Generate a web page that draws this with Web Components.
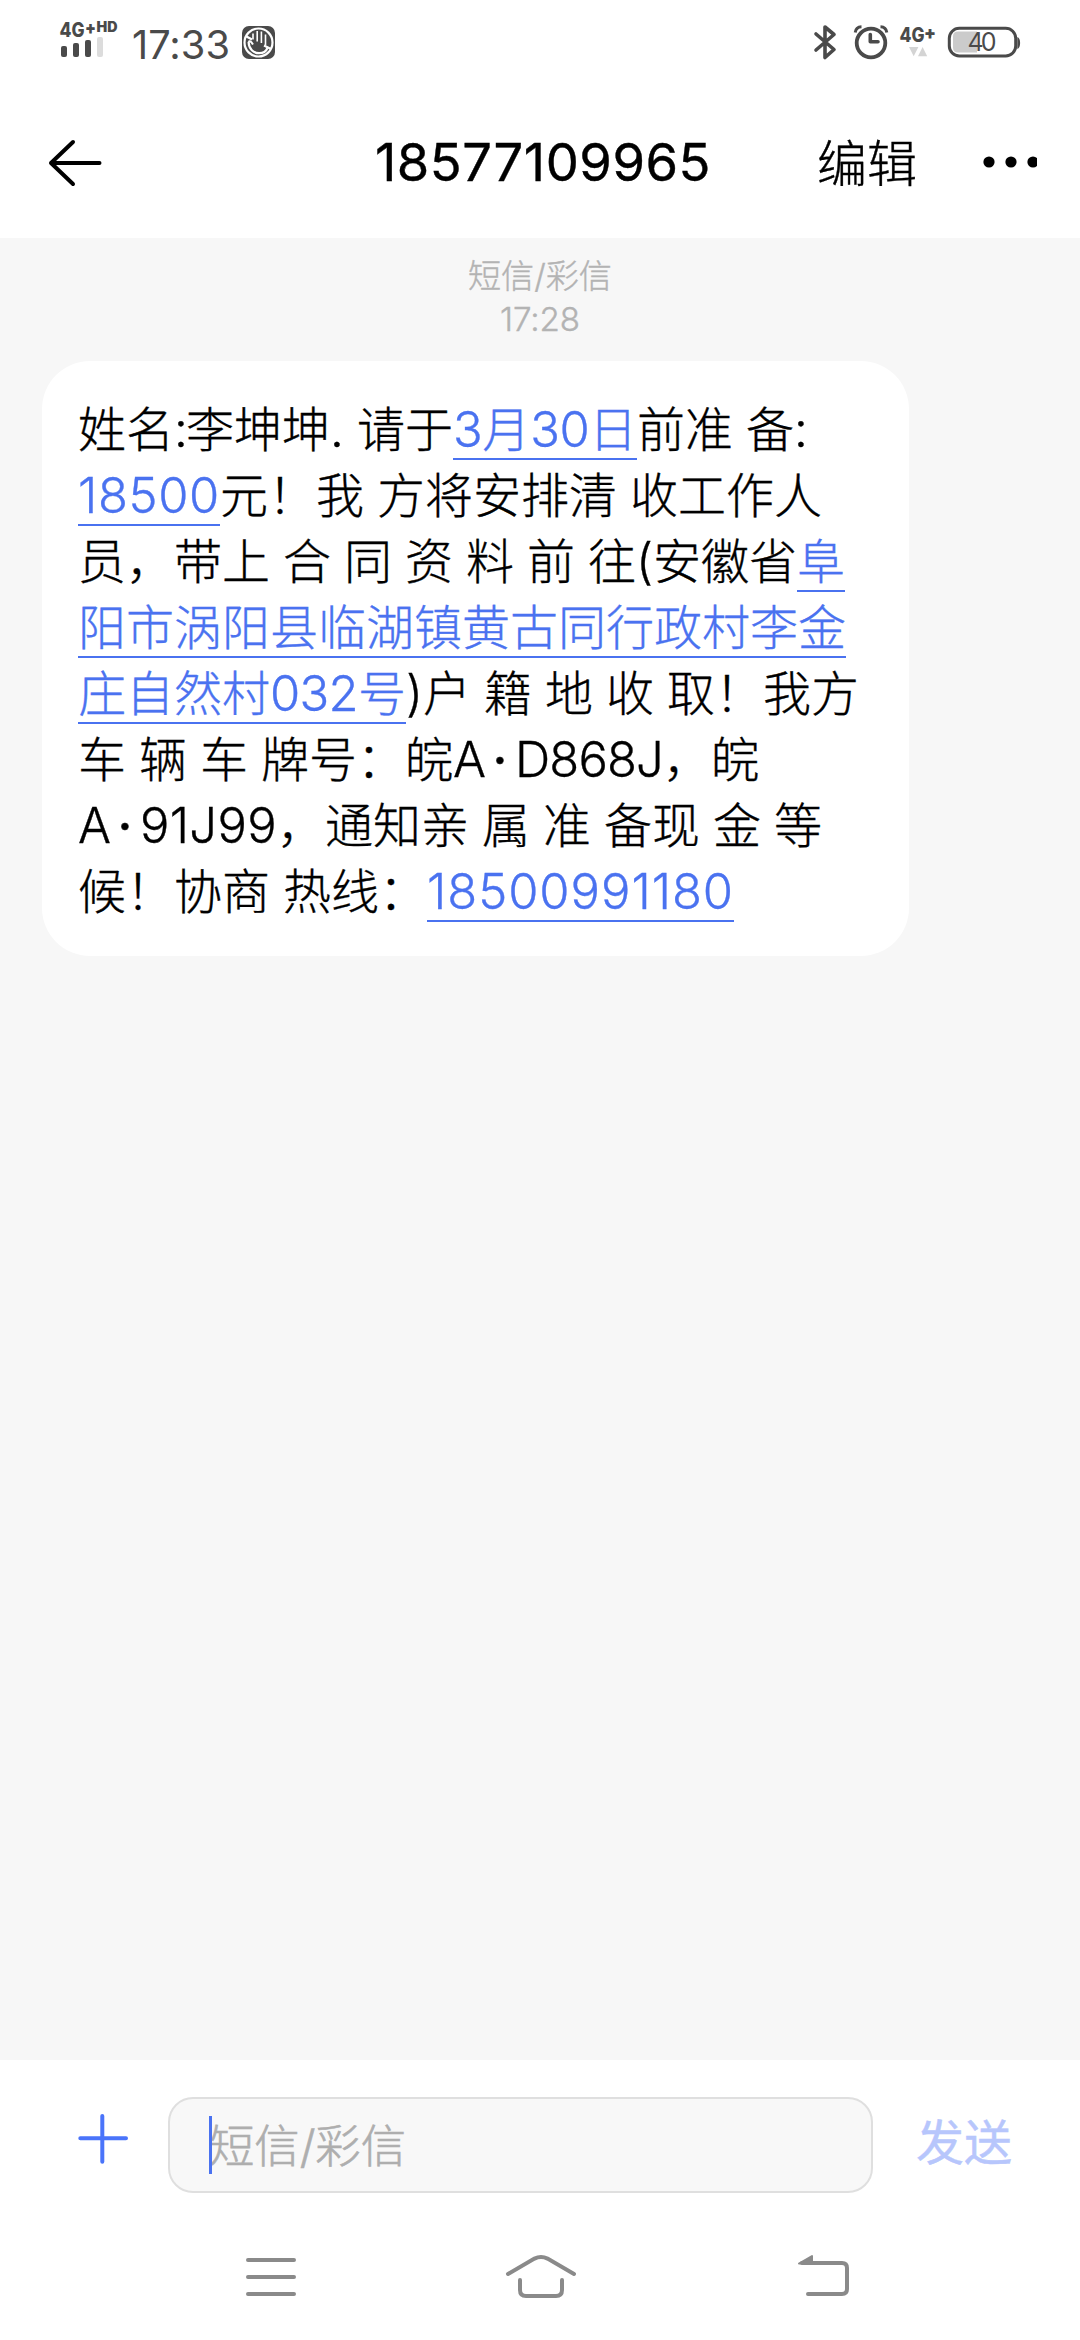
<!DOCTYPE html>
<html lang="zh-CN">
<head>
<meta charset="utf-8">
<title>短信</title>
<style>
html,body{margin:0;padding:0;background:#fff}
body{font-family:Inter,"Noto Sans CJK SC",sans-serif;height:2340px;overflow:hidden}
</style>
</head>
<body>
<sms-screen></sms-screen>
<script>
const define = (name, html, setup) => customElements.define(name, class extends HTMLElement {
  connectedCallback() {
    if (this.shadowRoot) return;
    const t = document.createElement('template');
    t.innerHTML = html;
    this.attachShadow({mode: 'open'}).append(t.content.cloneNode(true));
    if (setup) setup(this, this.shadowRoot);
  }
});

// Inline run with a fixed advance: letter-spacing is spread over its characters.
const fit = (host) => {
  const target = parseFloat(host.getAttribute('w'));
  if (!target) return;
  const probe = host.shadowRoot.querySelector('span');
  const n = [...host.textContent].length;
  if (!host.hasAttribute('center')) {
    host.style.letterSpacing = ((target - probe.getBoundingClientRect().width) / n) + 'px';
  }
  host.style.width = target + 'px';
};
define('text-run', `<style>
  :host{display:inline-block;white-space:pre;vertical-align:baseline}
  :host([center]){text-align:center;font-weight:500}
  span{font-size:1.02em}
</style><span><slot></slot></span>`, fit);

define('text-link', `<style>
  :host{display:inline;color:#4a72f0;padding-bottom:1px;
    background:linear-gradient(#4a72f0,#4a72f0) left bottom/100% 2.5px no-repeat}
</style><slot></slot>`);

define('msg-line', `<style>
  :host{display:block;height:66px;line-height:66px;white-space:pre}
</style><slot></slot>`);

define('status-bar', `<style>
  :host{display:flex;flex:none;height:84px;box-sizing:border-box;padding:20px 60px 0 60px;color:#4a4a4a;justify-content:space-between;align-items:flex-start}
  .side{display:flex;align-items:flex-start}
  svg{display:block;overflow:visible}
  text{font-family:Inter,sans-serif}
  .time{font-size:39px;line-height:48px;margin:1px 0 0 12px;width:112px}
</style>
<div class="side">
  <svg width="60" height="40" viewBox="60 20 60 40" fill="#4a4a4a">
    <text x="59.5" y="36.8" font-size="20" font-weight="800" textLength="25" lengthAdjust="spacingAndGlyphs">4G</text>
    <text x="85" y="33.5" font-size="18" font-weight="900" textLength="11" lengthAdjust="spacingAndGlyphs">+</text>
    <text x="96.5" y="32" font-size="14" font-weight="900" textLength="21" lengthAdjust="spacingAndGlyphs">HD</text>
    <rect x="61" y="46" width="6" height="11" rx="2"/><rect x="73" y="43" width="6" height="14" rx="2"/>
    <rect x="85" y="40" width="6" height="17" rx="2"/><rect x="97" y="37" width="6" height="20" rx="2" fill="#dcdcdc"/>
  </svg>
  <div class="time"><text-run w="98">17:33</text-run></div>
  <svg width="33" height="40" viewBox="242 20 33 40" style="margin-left:-2px">
    <rect x="242" y="26" width="33" height="33" rx="7" fill="#4a4a4a"/>
    <circle cx="258.5" cy="42.5" r="14" fill="none" stroke="#fff" stroke-width="2.2"/>
    <path d="M246.5 36.5L252 39.5M264 45.5L271 49" stroke="#fff" stroke-width="2.2"/>
    <path d="M253 39.5V33.5M257.2 41.5V31M261.4 43V31.5M265.5 45V34.5" stroke="#fff" stroke-width="1.6"/>
    <path d="M248.6 42C248.8 49 253.5 53.2 259.3 53.2C263 53.2 266 51.5 267.5 48" fill="none" stroke="#fff" stroke-width="2.2"/>
    <path d="M248.6 42Q250 39.5 253 44.5" fill="none" stroke="#fff" stroke-width="2"/>
  </svg>
</div>
<div class="side">
  <svg width="206" height="40" viewBox="814 20 206 40" fill="none" stroke="#4a4a4a">
    <path d="M816 34L834 49.5L825 57.5V27L834 34.5L816 50" stroke-width="3.6" stroke-linejoin="round" stroke-linecap="round"/>
    <circle cx="871" cy="43" r="14.3" stroke-width="3.8"/>
    <path d="M870.3 34.5V41.8H878" stroke-width="3.6" stroke-linejoin="round" stroke-linecap="round"/>
    <path d="M855.2 32.5C855.6 29.2 858 26.8 861.5 26.7M886.8 32.5C886.4 29.2 884 26.8 880.5 26.7" stroke-width="3"/>
    <g fill="#4a4a4a" stroke="none">
      <text x="899.5" y="42" font-size="20" font-weight="800" textLength="25" lengthAdjust="spacingAndGlyphs">4G</text>
      <text x="924" y="38.5" font-size="18" font-weight="900" textLength="12" lengthAdjust="spacingAndGlyphs">+</text>
      <path d="M909 47H918.4L913.7 56.2ZM918 56.2H927.2L922.6 47Z" fill="#d4d4d4"/>
      <path d="M977 31.5H958q-5 0-5 5v11q0 5 5 5h19z" fill="#cbcbcb"/>
      <path d="M1017.3 37q2.8 1.2 2.8 6t-2.8 6z"/>
      <text x="967.5" y="51.4" font-size="25" textLength="29" lengthAdjust="spacing">40</text>
    </g>
    <rect x="949.3" y="28.3" width="66.4" height="27.6" rx="10" stroke-width="3"/>
  </svg>
</div>`);

define('chat-header', `<style>
  :host{display:flex;flex:none;height:154px;align-items:flex-start;color:#000}
  svg{display:block}
  .back{width:60px;height:60px;margin:48px 0 0 45px}
  .title{margin:48px 0 0 270px;width:442px;font-size:51.5px;line-height:60px;font-weight:400;-webkit-text-stroke:.4px #000}
  .edit{margin-top:50px;width:160px;font-size:50px;line-height:60px;font-weight:300;-webkit-text-stroke:.4px #000}
  .more{margin-top:68px}
</style>
<svg class="back" viewBox="45 132 60 60" fill="none" stroke="#000" stroke-width="4" stroke-linecap="round" stroke-linejoin="round"><path d="M73 142L51 163L73 184M51 163H99.5"/></svg>
<div class="title"><text-run w="336">18577109965</text-run></div>
<div class="edit">编辑</div>
<svg class="more" width="60" height="20" viewBox="977 152 60 20"><circle cx="989" cy="162" r="5.6"/><circle cx="1011" cy="162" r="5.6"/><circle cx="1033" cy="162" r="5.6"/></svg>`);

define('time-stamp', `<style>
  :host{display:flex;flex-direction:column;align-items:center;color:#b3b3b3;font-size:32.5px;font-weight:300;line-height:42px;-webkit-text-stroke:.4px #b3b3b3}
</style>
<div><text-run w="144">短信/彩信</text-run></div><div><text-run w="80">17:28</text-run></div>`);

define('msg-bubble', `<style>
  :host{display:block;box-sizing:border-box;margin-left:42px;width:867px;height:595px;border-radius:48px;background:#fff;padding:36px 0 0 36px;color:#000;font-size:48px;font-weight:300;word-spacing:-.5px;-webkit-text-stroke:.35px currentColor}
</style><slot></slot>`);

define('compose-bar', `<style>
  :host{display:flex;flex:none;height:156px;align-items:flex-start}
  .plus{display:block;margin:50px 0 0 74px}
  .box{box-sizing:border-box;margin:37px 0 0 36px;width:705px;height:96px;border:2px solid #dfdfdf;border-radius:25px;background:#f8f8f8;display:flex;padding:17px 0 0 39px;color:#aeaeae;font-size:44.5px;line-height:62px;font-weight:300;-webkit-text-stroke:.6px #aeaeae}
  .caret{width:3px;height:58px;background:#4a72f0;margin-right:-3px;z-index:1}
  .send{margin:51px 0 0 43px;font-size:48px;line-height:64px;color:#b7c6fc;-webkit-text-stroke:.5px #b7c6fc}
</style>
<svg class="plus" width="58" height="56" viewBox="74 2110 58 56" stroke="#4a74fa" stroke-width="4" stroke-linecap="round"><path d="M80.3 2138.2H126M102.3 2116V2161.8"/></svg>
<div class="box"><div class="caret"></div><text-run w="197">短信/彩信</text-run></div>
<div class="send">发送</div>`);

define('nav-bar', `<style>
  :host{display:flex;flex:none;box-sizing:border-box;height:124px;padding:34px 0 0 244px}
  svg{display:block;flex:none}
  .home{margin:0 217px 0 205px}
</style>
<svg width="54" height="54" viewBox="244 2250 54 54" stroke="#8a8a8a" stroke-width="4" stroke-linecap="round"><path d="M248 2260H294M248 2277H294M248 2294H294"/></svg>
<svg class="home" width="76" height="54" viewBox="503 2250 76 54" fill="none" stroke="#8a8a8a" stroke-width="4" stroke-linecap="round"><path d="M508 2274L534.5 2258.6Q541 2255.4 547.5 2258.6L574 2274M520 2280V2290Q520 2296 526 2296H556Q562 2296 562 2290V2280"/></svg>
<svg width="54" height="54" viewBox="796 2250 54 54" fill="none" stroke="#8a8a8a" stroke-width="4" stroke-linecap="round"><path d="M802 2263H842Q847 2263 847 2268V2289Q847 2294 842 2294H808"/><path d="M799 2263.5L812 2256V2263.5Z" fill="#8a8a8a" stroke-width="2" stroke-linejoin="round"/></svg>`);

define('sms-screen', `<style>
  :host{display:flex;flex-direction:column;width:1080px;height:2340px;background:#fff;overflow:hidden}
  main{flex:none;height:1822px;background:#f7f7f7;box-sizing:border-box;padding-top:17px}
  time-stamp{height:84px}
  msg-bubble{margin-top:22px}
</style>
<status-bar></status-bar>
<chat-header></chat-header>
<main>
<time-stamp></time-stamp>
<msg-bubble><msg-line>姓名<text-run w="12">:</text-run>李坤坤<text-run w="27">. </text-run>请于<text-link><text-run w="29.3">3</text-run>月<text-run w="58.7">30</text-run>日</text-link>前准 备<text-run w="12">:</text-run></msg-line><msg-line><text-link><text-run w="142">18500</text-run></text-link>元！我 方将安排清 收工作人</msg-line><msg-line>员，带上 合 同 资 料 前 往<text-run w="17">(</text-run>安徽省<text-link>阜</text-link></msg-line><msg-line><text-link>阳市涡阳县临湖镇黄古同行政村李金</text-link></msg-line><msg-line><text-link>庄自然村<text-run w="88">032</text-run>号</text-link><text-run w="17">)</text-run>户 籍 地 收 取！我方</msg-line><msg-line>车 辆 车 牌号：皖<text-run w="32">A</text-run><text-run center w="30">·</text-run><text-run w="148">D868J</text-run>，皖</msg-line><msg-line><text-run w="32">A</text-run><text-run center w="30">·</text-run><text-run w="137">91J99</text-run>，通知亲 属 准 备现 金 等</msg-line><msg-line>候！协商 热线：<text-link><text-run w="307">18500991180</text-run></text-link></msg-line></msg-bubble>
</main>
<compose-bar></compose-bar>
<nav-bar></nav-bar>`);

// Widths depend on styles of every ancestor, so fit once more when all elements exist.
const walk = (root) => root.querySelectorAll('*').forEach(el => {
  if (el.localName === 'text-run') { el.style.letterSpacing = '0'; el.style.width = 'auto'; fit(el); }
  if (el.shadowRoot) walk(el.shadowRoot);
});
walk(document);
</script>
</body>
</html>
